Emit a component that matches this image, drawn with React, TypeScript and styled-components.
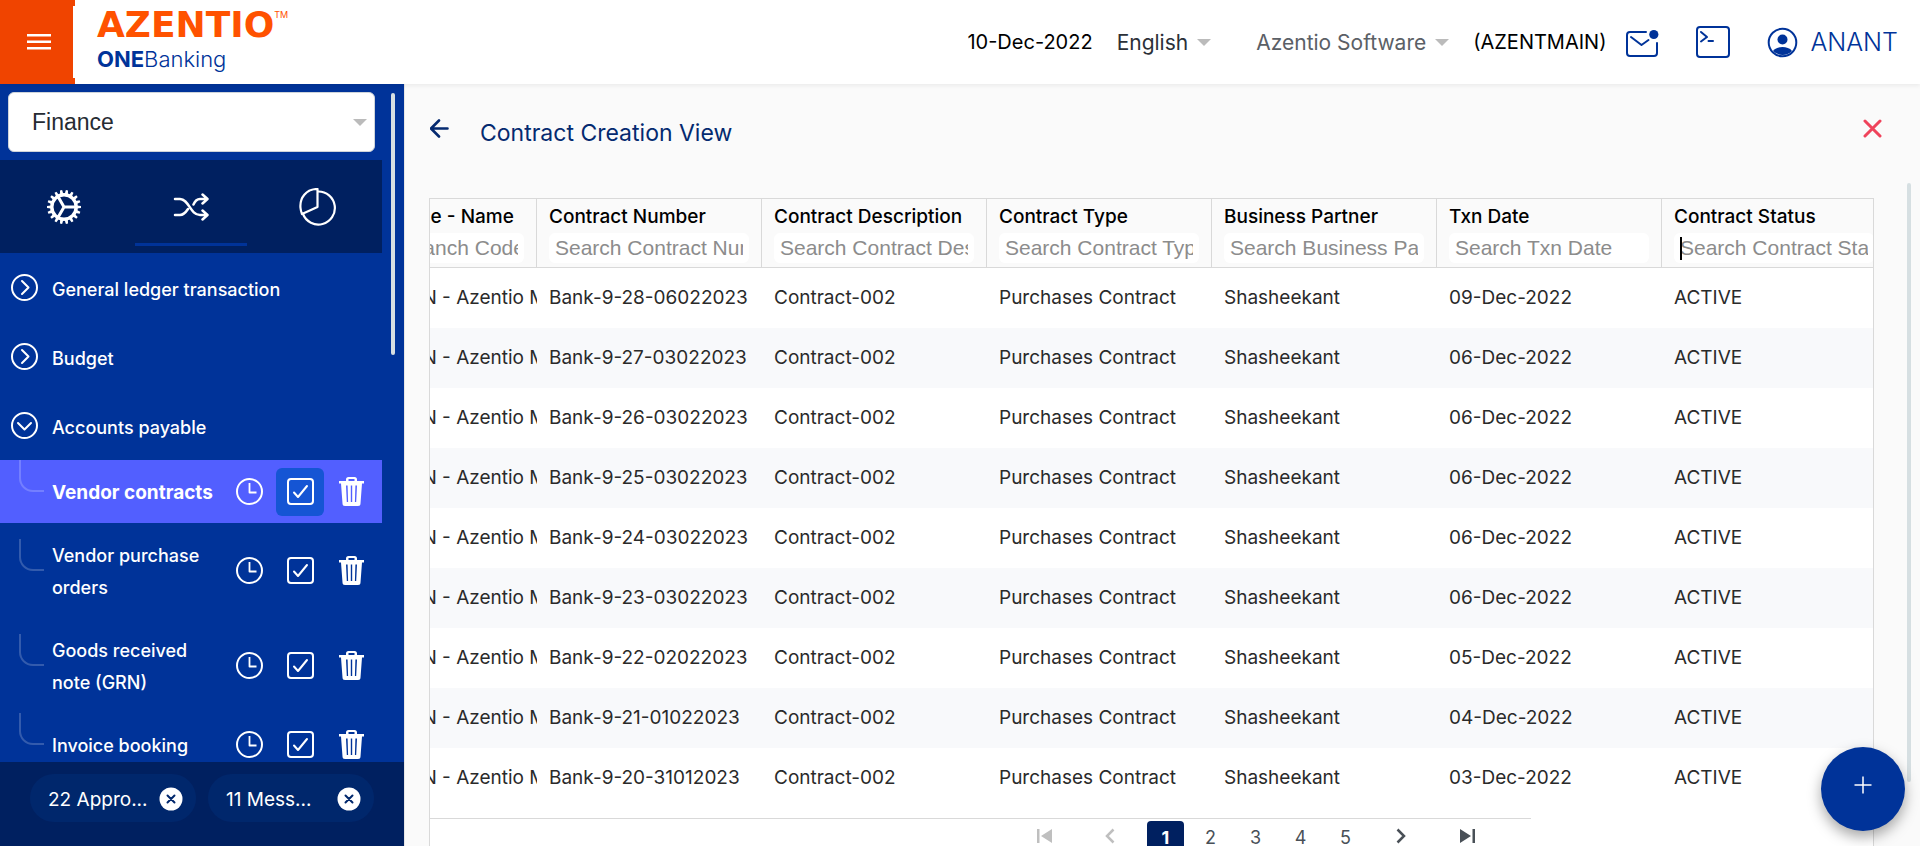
import React, { useLayoutEffect, useRef } from "react";
import styled, { createGlobalStyle } from "styled-components";

const navy = "#002060";
const blue = "#003399";
const ui = `Inter, "Liberation Sans", sans-serif`;
const plain = `"Liberation Sans", Arial, sans-serif`;

const GlobalStyle = createGlobalStyle`
  *, *::before, *::after { box-sizing: border-box; }
  body { margin: 0; background: #fafafa; font-family: ${ui}; font-size: 19px; color: #000; }
  button, select, input { font: inherit; color: inherit; margin: 0; }
  button { border: 0; padding: 0; background: none; cursor: pointer; display: inline-flex; align-items: center; justify-content: center; }
`;

const Page = styled.div`
  display: flex;
  flex-direction: column;
  height: 100vh;
  overflow: hidden;
`;

const TopBar = styled.header`
  display: flex;
  align-items: stretch;
  height: 84px;
  flex: none;
  background: #fff;
  box-shadow: 0 2px 4px rgba(0, 0, 0, 0.06);
  z-index: 1;
`;

const MenuButton = styled.button`
  width: 75px;
  padding-left: 2px;
  background: linear-gradient(#fff, #fff) right 6px / 2px 72px no-repeat #f04400;
`;

const Brand = styled.div`
  display: flex;
  flex-direction: column;
  padding: 5px 0 0 22px;
`;

const BrandName = styled.div`
  display: flex;
  align-items: flex-start;
  font: bold 36px/40px "DejaVu Sans", sans-serif;
  color: #ff5200;
`;

const TradeMark = styled.sup`
  font: 9px/12px ${ui};
  padding-top: 4px;
`;

const Product = styled.div`
  font: 300 22px/28px ${ui};
  color: ${blue};
  strong { font-weight: 700; }
`;

const Tools = styled.div`
  flex: 1;
  display: flex;
  align-items: center;
  justify-content: flex-end;
  padding-right: 22px;
`;

const ToolText = styled.span`
  font-size: 20px;
  white-space: nowrap;
`;

const PickerBox = styled.div<{ $muted?: boolean; $wide?: boolean }>`
  display: flex;
  align-items: center;
  gap: 9px;
  margin: ${(p) => (p.$wide ? "0 24px 0 45px" : "0 0 0 24px")};
  color: ${(p) => (p.$muted ? "#5b6066" : "#2b3038")};
  font-size: 21px;
`;

const Picker = styled.select`
  appearance: none;
  field-sizing: content;
  border: 0;
  padding: 0;
  background: none;
  outline: none;
`;

const Caret = styled.span`
  border: 7px solid transparent;
  border-top-color: #bbb;
  border-bottom: 0;
  pointer-events: none;
`;

const ToolIcons = styled.div`
  display: flex;
  align-items: center;
  gap: 37px;
  margin-left: 19px;
  color: ${blue};
`;

const UserButton = styled.button`
  gap: 12px;
  font-size: 25px;
  font-weight: 300;
`;

const Body = styled.div`
  display: flex;
  flex: 1;
  min-height: 0;
`;

const Sidebar = styled.aside`
  width: 404px;
  flex: none;
  display: flex;
  flex-direction: column;
  background: ${blue};
  color: #fff;
`;

const SidebarScroll = styled.div`
  flex: 1;
  min-height: 0;
  overflow: hidden;
  display: flex;
  justify-content: space-between;
  padding-right: 9px;
`;

const SidebarColumn = styled.div`
  width: 382px;
`;

const Thumb = styled.div<{ $height: string }>`
  width: 4px;
  height: ${(p) => p.$height};
  margin-top: 9px;
  border-radius: 2px;
  background: #d6dfe2;
`;

const ModuleBox = styled.div`
  display: flex;
  align-items: center;
  height: 60px;
  margin: 8px 7px 8px 8px;
  padding: 0 7px 0 23px;
  border: 1px solid #ced4da;
  border-radius: 6px;
  background: #fff;
  color: #262b33;
  font: 23px/28px ${plain};
  select { flex: 1; }
`;

const Tabs = styled.nav`
  display: flex;
  height: 93px;
  background: ${navy};
`;

const Tab = styled.button<{ $active?: boolean }>`
  flex: 1;
  height: 86px;
  margin: 0 8px;
  padding-top: 10px;
  border-bottom: 3px solid ${(p) => (p.$active ? blue : "transparent")};
`;

const Tree = styled.ul`
  list-style: none;
  margin: 0;
  padding: 0;
`;

const Group = styled.button`
  width: 100%;
  height: 69px;
  gap: 14px;
  padding-left: 11px;
  justify-content: flex-start;
  font-size: 18px;
  font-weight: 500;
  span { padding-top: 3px; }
`;

const Leaf = styled.li<{ $active?: boolean }>`
  display: flex;
  align-items: center;
  padding: 0 7px 0 19px;
  font-size: ${(p) => (p.$active ? "19px" : "18px")};
  font-weight: ${(p) => (p.$active ? 700 : 500)};
  background: ${(p) => (p.$active ? "#525fff" : "none")};
`;

const Connector = styled.span`
  width: 25px;
  height: 32px;
  flex: none;
  margin: 0 8px 31px 0;
  border: solid rgba(255, 255, 255, 0.2);
  border-width: 0 0 2px 2px;
  border-bottom-left-radius: 14px;
`;

const LeafLink = styled.a`
  flex: 1;
  padding: 17px 0 14px;
  line-height: 32px;
  color: #fff;
  text-decoration: none;
`;

const LeafTools = styled.div`
  display: flex;
  gap: 3px;
`;

const LeafButton = styled.button<{ $on?: boolean }>`
  width: 48px;
  height: 48px;
  border-radius: 6px;
  background: ${(p) => (p.$on ? "#1555d4" : "none")};
`;

const ChipBar = styled.footer`
  display: flex;
  gap: 12px;
  height: 84px;
  padding: 12px 30px;
  background: ${navy};
`;

const Chip = styled.div`
  flex: 1;
  display: flex;
  align-items: center;
  justify-content: space-between;
  height: 48px;
  padding: 2px 13px 0 18px;
  border-radius: 24px;
  background: #00276c;
`;

const Main = styled.main`
  flex: 1;
  min-width: 0;
  display: flex;
  border-left: 1px solid #e6e6e6;
`;

const Content = styled.div`
  flex: 1;
  min-width: 0;
  display: flex;
  flex-direction: column;
  padding-left: 24px;
`;

const TitleRow = styled.div`
  display: flex;
  align-items: flex-start;
  height: 114px;
  padding: 35px 25px 0 1px;
`;

const Title = styled.h1`
  flex: 1;
  margin: 0 0 0 31px;
  font-size: 23px;
  line-height: 28px;
  font-weight: 400;
  color: #052a70;
`;

const Grid = styled.section`
  flex: 1;
  min-height: 0;
  margin-right: 33px;
  border: 1px solid #d9d9d9;
  border-bottom: 0;
  background: #fff;
`;

const GridScroll = styled.div`
  overflow-x: auto;
  scrollbar-width: none;
`;

const Table = styled.table`
  width: 100%;
  min-width: 1575px;
  table-layout: fixed;
  border-collapse: separate;
  border-spacing: 0;
`;

const HeadCell = styled.th`
  height: 69px;
  padding: 2px 12px 4px;
  text-align: left;
  font-weight: 500;
  vertical-align: top;
  background: #fafafa;
  border-right: 1px solid #d9d9d9;
  border-bottom: 1px solid #d9d9d9;
  label { display: block; line-height: 32px; white-space: nowrap; }
`;

const Search = styled.input`
  display: block;
  width: 100%;
  height: 30px;
  padding: 0 6px;
  border: 0;
  border-radius: 6px;
  outline: none;
  background: #fff;
  font: 21px/24px ${plain};
  &::placeholder { color: #8c8c8c; opacity: 1; }
`;

const SearchBox = styled.div`
  position: relative;
`;

const TextCursor = styled.span`
  position: absolute;
  left: 6px;
  top: 4px;
  width: 2px;
  height: 23px;
  background: #000;
`;

const Row = styled.tr`
  &:nth-child(even) { background: #f8f9fb; }
`;

const Cell = styled.td`
  height: 60px;
  padding: 0 0 2px 12px;
  overflow: hidden;
  white-space: nowrap;
  color: #2a2a2a;
`;

const Pager = styled.nav`
  display: flex;
  align-items: flex-start;
  width: 1101px;
  max-width: 100%;
  margin-top: 10px;
  padding-left: 581px;
  border-top: 1px solid #d9d9d9;
`;

const PageButton = styled.button<{ $active?: boolean; $faint?: boolean; $step?: boolean }>`
  flex: none;
  width: ${(p) => (p.$step ? "58px" : "37px")};
  height: 37px;
  margin: 2px 4px 0;
  padding-bottom: ${(p) => (p.$step ? "8px" : "4px")};
  font-size: 18px;
  border-radius: 4px;
  color: ${(p) => (p.$active ? "#fff" : p.$faint ? "#bfbfbf" : "#495057")};
  background: ${(p) => (p.$active ? navy : "none")};
  font-weight: ${(p) => (p.$active ? 700 : 400)};
`;

const MainRail = styled.div`
  width: 13px;
  padding-top: 90px;
`;

const AddButton = styled.button`
  position: fixed;
  right: 15px;
  bottom: 15px;
  width: 84px;
  height: 84px;
  padding-bottom: 8px;
  border-radius: 50%;
  background: ${blue};
  box-shadow: 0 6px 14px rgba(0, 0, 0, 0.35);
`;

const line = { fill: "none", stroke: "currentColor", strokeLinecap: "round", strokeLinejoin: "round" } as const;

const BurgerIcon = () => (
  <svg width="24" height="18" viewBox="0 0 24 18" stroke="#fff" strokeWidth="2.400"><path d="M0 2.300h24M0 8.800h24M0 15.300h24" /></svg>
);
const MailIcon = () => (
  <svg width="34" height="34" viewBox="0 0 34 34" {...line} strokeWidth="2">
    <path d="M21 7H5a3 3 0 0 0-3 3v18a3 3 0 0 0 3 3h24a3 3 0 0 0 3-3V18M6 12l10.500 8L23.500 15" />
    <circle cx="28.800" cy="9.500" r="4.600" fill="currentColor" stroke="none" />
  </svg>
);
const TerminalIcon = () => (
  <svg width="34" height="34" viewBox="0 0 34 34" {...line} strokeWidth="2">
    <rect x="1" y="2" width="32" height="30" rx="3" /><path d="M5 7l6 5-6 4.500M12.500 16H17" />
  </svg>
);
const UserIcon = () => (
  <svg width="31" height="31" viewBox="0 0 31 31" {...line} strokeWidth="2">
    <circle cx="15.500" cy="15.500" r="13.800" />
    <circle cx="15.500" cy="12.500" r="5" fill="currentColor" stroke="none" />
    <path d="M6 24a13.500 13.500 0 0 0 19 0c-2-3-6-4-9.500-4S8 21 6 24z" fill="currentColor" stroke="none" />
  </svg>
);
const GearIcon = () => (
  <svg width="36" height="36" viewBox="-18 -18 36 36" fill="none" stroke="#fff">
    <circle r="12.200" strokeWidth="3.400" />
    {Array.from({ length: 18 }, (_, i) => (
      <path key={i} d="M-1.100-17h2.200L1.600-13h-3.200z" fill="#fff" stroke="none" transform={`rotate(${i * 20 + 10})`} />
    ))}
    <path d="M0 0H12M0 0L-6-10.500M0 0L-6 10.500" strokeWidth="3" />
  </svg>
);
const ShuffleIcon = () => (
  <svg width="36" height="28" viewBox="0 0 36 28" {...line} stroke="#fff" strokeWidth="2.500">
    <path d="M2 6h5c9 0 10 16 20 16h7M2 22h5c4 0 6-3 8-6M20.500 11.500C22 8 24 6 27 6h7M29.500 1.500L34.500 6l-5 4.500M29.500 17.500l5 4.500-5 4.500" />
  </svg>
);
const PieIcon = () => (
  <svg width="38" height="38" viewBox="0 0 38 38" {...line} stroke="#fff" strokeWidth="2.200">
    <path d="M19 3.500A16.500 16.500 0 1 1 4 26" />
    <path d="M18.500 1C7 1 .5 10 1.500 20c.2 2 .7 4 1.500 6l15.500-7z" />
  </svg>
);
const CircleChevron = ({ open }: { open?: boolean }) => (
  <svg width="27" height="27" viewBox="0 0 27 27" {...line} strokeWidth="2">
    <circle cx="13.500" cy="13.500" r="12.500" />
    <path d={open ? "M7 11l6.500 6.500L20 11" : "M11 7l6.500 6.500L11 20"} />
  </svg>
);
const ClockIcon = () => (
  <svg width="27" height="27" viewBox="0 0 27 27" {...line} strokeWidth="2">
    <circle cx="13.500" cy="13.500" r="12.500" /><path d="M13.500 5v9.500h7" strokeWidth="1.800" strokeLinecap="butt" />
  </svg>
);
const CheckIcon = () => (
  <svg width="27" height="27" viewBox="0 0 27 27" {...line} strokeWidth="2">
    <rect x="1" y="1" width="25" height="25" rx="3" /><path d="M7 14.500l4 4.500 9-11" />
  </svg>
);
const TrashIcon = () => (
  <svg width="25" height="29" viewBox="0 0 25 29" fill="currentColor">
    <path fillRule="evenodd" d="M9.500 0h6A2.500 2.500 0 0 1 18 2.500V4h7v2.500h-2L21.500 26.500a2.500 2.500 0 0 1-2.500 2.500H6a2.500 2.500 0 0 1-2.500-2.500L2 6.500H0V4h7V2.500A2.500 2.500 0 0 1 9.500 0zM9.500 2v2h6V2zM7 8.500l.8 16.500h1.300L8.600 8.500zM11.800 8.500V25h1.400V8.500zM16.400 8.500L15.900 25h1.300L18 8.500z" />
  </svg>
);
const ChipClose = () => (
  <svg width="24" height="24" viewBox="0 0 24 24"><circle cx="12" cy="12" r="11.500" fill="#fff" /><path d="M8.500 8.500l7 7M15.500 8.500l-7 7" stroke="#00276c" strokeWidth="2" strokeLinecap="round" /></svg>
);
const BackIcon = () => (
  <svg width="19" height="19" viewBox="0 0 19 19" {...line} stroke="#052a70" strokeWidth="2.600"><path d="M17.500 9.500H2M9 1.500l-8 8 8 8" /></svg>
);
const CloseIcon = () => (
  <svg width="19" height="19" viewBox="0 0 19 19" {...line} stroke="#ef435b" strokeWidth="3"><path d="M2 2l15 15M17 2L2 17" /></svg>
);
const PlusIcon = () => (
  <svg width="18" height="18" viewBox="0 0 18 18" stroke="#fff" strokeWidth="1.500"><path d="M9 .5v17M.5 9h17" /></svg>
);
const EndIcon = ({ flip }: { flip?: boolean }) => (
  <svg width="17" height="16" viewBox="0 0 17 16" fill="currentColor">
    <path d={flip ? "M1 1v14l11-7zM13.500 1h2.500v14h-2.500z" : "M16 1v14L5 8zM1 1h2.500v14H1z"} />
  </svg>
);
const StepIcon = ({ flip }: { flip?: boolean }) => (
  <svg width="10" height="16" viewBox="0 0 10 16" fill="none" stroke="currentColor" strokeWidth="2.500">
    <path d={flip ? "M1.500 1.500L8 8l-6.500 6.500" : "M8.500 1.500L2 8l6.500 6.500"} />
  </svg>
);

const groups = [
  { name: "General ledger transaction", open: false },
  { name: "Budget", open: false },
  { name: "Accounts payable", open: true },
];
const leaves = ["Vendor contracts", "Vendor purchase orders", "Goods received note (GRN)", "Invoice booking"];
const columns = [
  { label: "Branch Code - Name", hint: "Search Branch Code - Name" },
  { label: "Contract Number", hint: "Search Contract Number" },
  { label: "Contract Description", hint: "Search Contract Description" },
  { label: "Contract Type", hint: "Search Contract Type" },
  { label: "Business Partner", hint: "Search Business Partner" },
  { label: "Txn Date", hint: "Search Txn Date" },
  { label: "Contract Status", hint: "Search Contract Status" },
];
const contracts: [string, string][] = [
  ["Bank-9-28-06022023", "09-Dec-2022"],
  ["Bank-9-27-03022023", "06-Dec-2022"],
  ["Bank-9-26-03022023", "06-Dec-2022"],
  ["Bank-9-25-03022023", "06-Dec-2022"],
  ["Bank-9-24-03022023", "06-Dec-2022"],
  ["Bank-9-23-03022023", "06-Dec-2022"],
  ["Bank-9-22-02022023", "05-Dec-2022"],
  ["Bank-9-21-01022023", "04-Dec-2022"],
  ["Bank-9-20-31012023", "03-Dec-2022"],
];

export default function App() {
  const scroller = useRef<HTMLDivElement>(null);
  useLayoutEffect(() => {
    if (scroller.current) scroller.current.scrollLeft = 118;
  }, []);

  return (
    <Page>
      <GlobalStyle />
      <TopBar>
        <MenuButton aria-label="Toggle menu"><BurgerIcon /></MenuButton>
        <Brand>
          <BrandName>AZENTIO<TradeMark>TM</TradeMark></BrandName>
          <Product><strong>ONE</strong>Banking</Product>
        </Brand>
        <Tools>
          <ToolText>10-Dec-2022</ToolText>
          <PickerBox>
            <Picker aria-label="Language"><option>English</option></Picker>
            <Caret />
          </PickerBox>
          <PickerBox $muted $wide>
            <Picker aria-label="Company"><option>Azentio Software</option></Picker>
            <Caret />
          </PickerBox>
          <ToolText>(AZENTMAIN)</ToolText>
          <ToolIcons>
            <button aria-label="Mail"><MailIcon /></button>
            <button aria-label="Console"><TerminalIcon /></button>
            <UserButton><UserIcon />ANANT</UserButton>
          </ToolIcons>
        </Tools>
      </TopBar>
      <Body>
        <Sidebar>
          <SidebarScroll>
            <SidebarColumn>
              <ModuleBox>
                <Picker aria-label="Module"><option>Finance</option></Picker>
                <Caret />
              </ModuleBox>
              <Tabs>
                <Tab aria-label="Setup"><GearIcon /></Tab>
                <Tab aria-label="Transactions" $active><ShuffleIcon /></Tab>
                <Tab aria-label="Reports"><PieIcon /></Tab>
              </Tabs>
              <Tree>
                {groups.map((g) => (
                  <li key={g.name}>
                    <Group aria-expanded={g.open}><CircleChevron open={g.open} /><span>{g.name}</span></Group>
                  </li>
                ))}
                {leaves.map((name, i) => (
                  <Leaf key={name} $active={i === 0}>
                    <Connector />
                    <LeafLink href="#">{name}</LeafLink>
                    <LeafTools>
                      <LeafButton aria-label={`${name} history`}><ClockIcon /></LeafButton>
                      <LeafButton aria-label={`${name} approvals`} $on={i === 0}><CheckIcon /></LeafButton>
                      <LeafButton aria-label={`${name} delete`}><TrashIcon /></LeafButton>
                    </LeafTools>
                  </Leaf>
                ))}
              </Tree>
            </SidebarColumn>
            <Thumb $height="262px" />
          </SidebarScroll>
          <ChipBar>
            <Chip>22 Appro...<button aria-label="Dismiss approvals"><ChipClose /></button></Chip>
            <Chip>11 Mess...<button aria-label="Dismiss messages"><ChipClose /></button></Chip>
          </ChipBar>
        </Sidebar>
        <Main>
          <Content>
            <TitleRow>
              <button aria-label="Back"><BackIcon /></button>
              <Title>Contract Creation View</Title>
              <button aria-label="Close"><CloseIcon /></button>
            </TitleRow>
            <Grid>
              <GridScroll ref={scroller}>
                <Table>
                  <thead>
                    <tr>
                      {columns.map((c, i) => (
                        <HeadCell key={c.label}>
                          <label htmlFor={`filter-${i}`}>{c.label}</label>
                          <SearchBox>
                            <Search id={`filter-${i}`} placeholder={c.hint} />
                            {i === 6 && <TextCursor />}
                          </SearchBox>
                        </HeadCell>
                      ))}
                    </tr>
                  </thead>
                  <tbody>
                    {contracts.map(([number, date]) => (
                      <Row key={number}>
                        <Cell>AZENTMAIN - Azentio Main</Cell>
                        <Cell>{number}</Cell>
                        <Cell>Contract-002</Cell>
                        <Cell>Purchases Contract</Cell>
                        <Cell>Shasheekant</Cell>
                        <Cell>{date}</Cell>
                        <Cell>ACTIVE</Cell>
                      </Row>
                    ))}
                  </tbody>
                </Table>
              </GridScroll>
              <Pager aria-label="Pages">
                <PageButton $step $faint aria-label="First page"><EndIcon /></PageButton>
                <PageButton $step $faint aria-label="Previous page"><StepIcon /></PageButton>
                {[1, 2, 3, 4, 5].map((n) => (
                  <PageButton key={n} $active={n === 1}>{n}</PageButton>
                ))}
                <PageButton $step aria-label="Next page"><StepIcon flip /></PageButton>
                <PageButton $step aria-label="Last page"><EndIcon flip /></PageButton>
              </Pager>
            </Grid>
          </Content>
          <MainRail><Thumb $height="599px" /></MainRail>
        </Main>
      </Body>
      <AddButton aria-label="Add contract"><PlusIcon /></AddButton>
    </Page>
  );
}
